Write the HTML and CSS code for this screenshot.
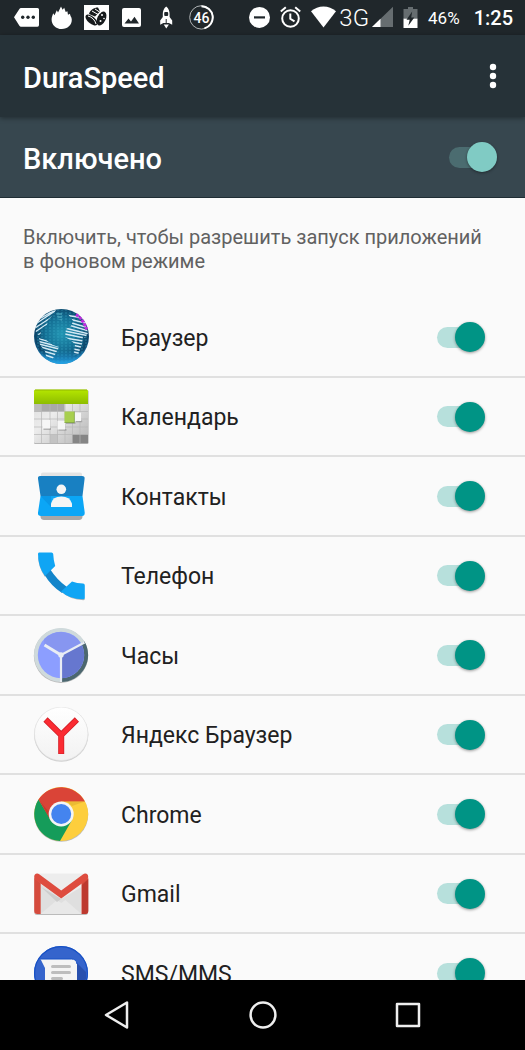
FILE: index.html
```html
<!DOCTYPE html>
<html lang="ru">
<head>
<meta charset="utf-8">
<meta name="viewport" content="width=device-width, initial-scale=1">
<title>DuraSpeed</title>
<link rel="stylesheet" href="styles.css">
</head>
<body>
<div class="status">
  <div class="status-left">
    <svg width="25" height="25" viewBox="0 0 25 25"><path fill="#fff" d="M7 3h16.500q1.500 0 1.500 1.500v15.500q0 1.700-1.500 1.700H7q-1 0-1.600-.9L0 12.300 5.400 4Q6 3 7 3z"/><g fill="#20272b"><circle cx="8.700" cy="12.300" r="1.700"/><circle cx="14" cy="12.300" r="1.700"/><circle cx="19.300" cy="12.300" r="1.700"/></g></svg>
    <svg width="25" height="25" viewBox="0 0 25 25"><path fill="#fff" d="M2.600 14.500c0-2.500 1-4.300 1.600-6.300l1.300 2.100 2.300-5 1.200 2.200L12 1.500l1.600 3.300 1.600-2 1.500 4.300 1.700-.8.600 3.500 2-1c-.2 2 1.800 3 1.800 6 0 5.200-4.200 9.300-10 9.300S2.600 20 2.600 14.500z"/></svg>
    <svg width="25" height="25" viewBox="0 0 25 25"><path fill="#fff" d="M0 0h25v25H0z"/><g fill="#171b1d"><ellipse cx="7.500" cy="15" rx="3.600" ry="7.200" transform="rotate(-50 7.500 15)"/><ellipse cx="17.500" cy="13.500" rx="4.200" ry="7.500" transform="rotate(25 17.500 13.500)"/><path d="M5 9c1-4 5-6.500 9-6.500l2 4-5 5z"/></g><path d="M4 11c4 1 7 4 8 8M8 6l7 4M11 4l6 4" stroke="#fff" fill="none" stroke-width="1"/><g fill="#fff"><circle cx="18" cy="10" r="1"/><circle cx="16.500" cy="16" r="1"/><circle cx="20" cy="13.500" r=".8"/></g></svg>
    <svg width="25" height="25" viewBox="0 0 25 25"><rect x="3" y="3" width="19" height="19" rx="2" fill="#fff"/><path fill="#20272b" d="M5.500 18.500l4-5 2.500 3 3.500-4.700 4.500 6.700z"/></svg>
    <svg width="25" height="25" viewBox="0 0 25 25"><path fill="#fff" d="M12.200 1.500c2.500 2 3.400 4.700 3.400 7.500v3l2.600 3.500v4.200l-3.300-1.600H9.400l-3.200 1.600v-4.200L8.800 12V9c0-2.800.9-5.500 3.400-7.500zM9.700 19.400h5.200l-2.600 4z"/><rect x="10.200" y="7" width="4" height="4" rx="1" fill="#20272b"/><path d="M12.200 14v5" stroke="#20272b"/></svg>
    <svg width="25" height="25" viewBox="0 0 25 25"><circle cx="12.400" cy="12.400" r="11.700" fill="none" stroke="#aeb2b4" stroke-width="1"/><path d="M12.400 1.200a11.300 11.300 0 0 1 3 22.200" fill="none" stroke="#fff" stroke-width="2"/><text x="12.400" y="17.500" class="ring-text">46</text></svg>
  </div>
  <div class="status-right">
    <svg width="21" height="25" viewBox="0 0 21 25"><circle cx="10.500" cy="12.400" r="10.500" fill="#fff"/><path d="M5 12.400h11" stroke="#20272b" stroke-width="2.200"/></svg>
    <svg width="21" height="25" viewBox="0 0 21 25" fill="none" stroke="#fff" stroke-width="2"><circle cx="10.500" cy="13.500" r="8.300"/><path d="M10.300 8.500v5.300l4.200 2.600M.8 6.500l5-4.300M20.200 6.500l-5-4.300"/></svg>
    <div class="signal">
      <svg width="25" height="25" viewBox="0 0 25 25"><path fill="#fff" d="M0 6.300C7-.2 18-.2 25 6.300L12.500 22.500z"/></svg>
      <span class="network">3G</span>
      <svg width="21" height="25" viewBox="0 0 21 25"><path fill="#666d70" d="M21 1.700V22H0z"/><path fill="#fff" d="M8.500 13.800V22H0z"/></svg>
    </div>
    <svg width="15" height="25" viewBox="0 0 15 25"><path fill="#666d70" d="M5 2h5v2h4.500v10H.5V4H5z"/><path fill="#fff" d="M.5 13.700h14V23H.5z"/><path fill="#20272b" d="M9.200 6.500L3.500 14.700h3.200l-1.400 6 6-8.200H8.200z"/></svg>
    <span class="percent">46%</span>
    <time class="clock">1:25</time>
  </div>
</div>

<header class="appbar">
  <h1 class="title">DuraSpeed</h1>
  <button class="more" type="button" aria-label="Ещё"><svg width="8" height="26" viewBox="0 0 8 26" fill="#fff"><circle cx="4" cy="4" r="3.200"/><circle cx="4" cy="13" r="3.200"/><circle cx="4" cy="22" r="3.200"/></svg></button>
</header>

<div class="master">
  <label class="title" for="master">Включено</label>
  <input class="switch switch-light" id="master" type="checkbox" checked>
</div>

<main class="content">
  <p class="note">Включить, чтобы разрешить запуск приложений в фоновом режиме</p>
  <ul class="apps">
    <li class="app">
      <svg class="icon" viewBox="0 0 56 56">
        <defs>
          <radialGradient id="sea" cx=".5" cy=".45" r=".55"><stop offset="0" stop-color="#2396b4"/><stop offset=".55" stop-color="#146f94"/><stop offset=".88" stop-color="#0c4468"/><stop offset="1" stop-color="#1c6da4"/></radialGradient>
          <linearGradient id="glow" x1="0" y1="0" x2="0" y2="1"><stop offset=".75" stop-color="#23a5e8" stop-opacity="0"/><stop offset="1" stop-color="#23a5e8"/></linearGradient>
          <pattern id="dots" width="4" height="3" patternUnits="userSpaceOnUse"><path d="M0 1h2" stroke="#3fb4cf" stroke-width=".8"/></pattern>
          <clipPath id="land"><path d="M3 24L2 16 10 5l13-4-3 5-5 5-1 5-5 3-2 8zM6 29l7 2 7 5 6 2-3 6-5 9-4-2-2-9-5-6zM23 4h6v8l-4-2zM35 5l5-2 12 9 3 12-3 5-2-2-1 8-4 11-4-1 1-10-5-4-5-3 1-8 5-3 2-5z"/></clipPath>
        </defs>
        <circle cx="28.500" cy="27.500" r="27.500" fill="url(#sea)"/>
        <circle cx="28.500" cy="27.500" r="27" fill="url(#dots)" opacity=".55"/>
        <circle cx="28.500" cy="27.500" r="27.500" fill="url(#glow)"/>
        <g clip-path="url(#land)"><path d="M3 27l18-11M2 23L20 11M2 19l20-13M4 14L25 0M8 9l14-8M4 29l24 7M4 32l23 6M6 35l20 5M8 38l17 5M10 42l14 4M12 46l12 4M32 6l24 4M32 9l24 6M32 12l24 7M32 15l24 7M32 19l24 6M32 22l24 5M32 25l24 5M32 29l24 4M34 32l20 4M35 35l17 4M36 39l14 3M37 42l12 3M37 45l12 3" stroke="#d3e9f4" stroke-width="1.400"/><path d="M23 5h6M23 8h6M24 11h5" stroke="#61bed0"/></g>
        <path d="M43 5.500a26 26 0 0 1 10.500 15" stroke="#c02be0" stroke-width="3" fill="none" stroke-dasharray="3 1"/>
      </svg>
      <label class="name" for="app1">Браузер</label>
      <input class="switch" id="app1" type="checkbox" checked>
    </li>
    <li class="app">
      <svg class="icon" viewBox="0 0 56 56">
        <defs>
          <linearGradient id="lime" x1="0" y1="0" x2="0" y2="1"><stop offset="0" stop-color="#b5e600"/><stop offset="1" stop-color="#8dbd00"/></linearGradient>
          <linearGradient id="grey" x1="0" y1="0" x2="1" y2="1"><stop offset="0" stop-color="#d9d9d9"/><stop offset=".4" stop-color="#ececec"/><stop offset="1" stop-color="#b5b5b5"/></linearGradient>
        </defs>
        <rect x="1" y="1" width="54.500" height="54" rx="1.500" fill="#aaa"/>
        <rect x="1" y="1" width="54" height="53.200" rx="1.500" fill="url(#grey)"/>
        <path d="M1.500 14.500h30v8h-30z" fill="#a9a9a9"/><path d="M1.500 14.500h7v8h-7z" fill="#bbb"/>
        <path d="M39 45.500h16v8.500H39z" fill="#858585"/><path d="M17 45.500h8v8.500h-8z" fill="#c3c3c3"/>
        <path d="M8.500 14v40M17 14v40M24.500 14v40M32 14v40M39.500 14v40M47 14v40M1 22.500h54M1 30h54M1 38h54M1 45.500h54" stroke="#b8b8b8" stroke-width=".7"/>
        <path d="M1 2q0-1.300 1.500-1.300h51Q55 .7 55 2v13H1z" fill="url(#lime)"/><path d="M2 1h52" stroke="#91b800"/>
        <g fill="#777" opacity=".45"><path d="M10.500 39h7.500v2h-7.500zM25.500 40h8v1.800h-8zM33 33h9.500v2H33zM43 31.500h6.200v1.800H43z"/></g>
        <path d="M9.500 31h7.500v8.500H9.500zM24.500 32H32v8.500h-7.500zM41.500 23.500H48V32h-6.500z" fill="#f6f6f6"/>
        <path d="M31.500 22.500H41v11h-9.500z" fill="#a8cf4e"/><path d="M31.500 33.500h9.900V22.500" fill="none" stroke="#7da33c" stroke-width=".8"/>
      </svg>
      <label class="name" for="app2">Календарь</label>
      <input class="switch" id="app2" type="checkbox" checked>
    </li>
    <li class="app">
      <svg class="icon" viewBox="0 0 56 56">
        <path d="M8 8V6q0-1.500 2-1.500h37q2 0 2 1.500v3z" fill="#e3e3e3"/>
        <path d="M7.500 47v2q.5 3 3.500 3h35q3 0 3.500-3v-2z" fill="#a7a7a7"/>
        <path d="M7 8h42q3 0 2.600 2.800L49.500 28h-42L5 10.800Q4.700 8 7 8z" fill="#1880c2"/>
        <path d="M7.500 28h42l2.200 16.500q.3 3.500-2.700 3.500H8q-3.500 0-3-3.500z" fill="#0ba6f6"/>
        <path d="M7.500 28H18v11z" fill="#0998e8"/>
        <circle cx="28.300" cy="21.300" r="4.800" fill="#f5f5f5"/><path d="M18 39v-3.500q1.500-7 10.300-7T39 35.500V39z" fill="#f5f5f5"/>
      </svg>
      <label class="name" for="app3">Контакты</label>
      <input class="switch" id="app3" type="checkbox" checked>
    </li>
    <li class="app">
      <svg class="icon" viewBox="0 0 56 56">
        <path d="M28 43.500Q37 52 50.500 52.200q1.300 0 1.300-1.500L39 46zM5 8q.5 12 7 21l2-3z" fill="#b5b5b5"/>
        <path d="M11 26q7 12 18 19l5-6Q24 32 17 21z" fill="#1385ca"/>
        <path d="M6 4.500h12.500q1.500 0 1.700 1.500.3 6.500 2 12L12 28Q5 19 5 6q0-1.500 1-1.500z" fill="#10a5f4"/>
        <path d="M28 43.500l11-10Q44 35.500 50 35.500q1.800.2 1.800 2V50q0 1.300-1.500 1.300Q37 51.500 28 43.500z" fill="#10a5f4"/>
      </svg>
      <label class="name" for="app4">Телефон</label>
      <input class="switch" id="app4" type="checkbox" checked>
    </li>
    <li class="app">
      <svg class="icon" viewBox="0 0 56 56">
        <circle cx="28" cy="28.700" r="27.200" fill="#bbb"/><circle cx="28" cy="28" r="27" fill="#cfdadc"/>
        <path d="M28 28L51.500 14.500A27 27 0 0 1 28 55z" fill="#4c676f"/>
        <circle cx="28" cy="28" r="23.200" fill="#8c9eff"/>
        <path d="M28 28l20-11.600A23.200 23.200 0 0 1 28 51.200z" fill="#6677cf"/><path d="M28 28l20-11.600A23.200 23.200 0 0 0 11 12.500L11.500 18z" fill="#8796f0"/>
        <path d="M28 28v27M28 28L51.500 15.500" stroke="#e9edf4" stroke-width="2.200"/><path d="M28 28L11.500 18" stroke="#e9edf4" stroke-width="3"/><circle cx="28" cy="28" r="2.700" fill="#e9edf4"/>
      </svg>
      <label class="name" for="app5">Часы</label>
      <input class="switch" id="app5" type="checkbox" checked>
    </li>
    <li class="app">
      <svg class="icon" viewBox="0 0 56 56">
        <defs><linearGradient id="white" x1="0" y1="0" x2="0" y2="1"><stop offset="0" stop-color="#fff"/><stop offset="1" stop-color="#f2f2f2"/></linearGradient></defs>
        <circle cx="28.200" cy="27.600" r="27.200" fill="#cfcfcf"/><circle cx="28.200" cy="26.800" r="26.700" fill="url(#white)" stroke="#e2e2e2" stroke-width=".6"/>
        <path d="M12.500 12.500L28.200 28 43.900 12.500M28.200 27v20" fill="none" stroke="#d41f27" stroke-width="6"/>
        <path d="M13 13L28.200 28 43.400 13M28.200 28v18.500" fill="none" stroke="#fb2b32" stroke-width="4.500"/>
      </svg>
      <label class="name" for="app6">Яндекс Браузер</label>
      <input class="switch" id="app6" type="checkbox" checked>
    </li>
    <li class="app">
      <svg class="icon" viewBox="0 0 56 56">
        <circle cx="28.200" cy="28.800" r="27" fill="#bbb"/><circle cx="28.200" cy="28" r="27" fill="#fdce3d"/>
        <path d="M28.200 28L18 34 5.500 13.500A27 27 0 0 0 27 55l12-21z" fill="#159c5a"/>
        <path d="M28.200 15.500h23.700A27 27 0 0 0 5.500 13.500L17.500 34z" fill="#da4437"/>
        <path d="M34 15.500h17.900L39 20z" fill="#d9a72c" opacity=".5"/><path d="M5.500 13.500L17.500 34l1-5z" fill="#a52c24" opacity=".35"/>
        <circle cx="28.200" cy="28" r="12.500" fill="#f5f5f5"/><circle cx="28.200" cy="28" r="10" fill="#4484ef"/>
      </svg>
      <label class="name" for="app7">Chrome</label>
      <input class="switch" id="app7" type="checkbox" checked>
    </li>
    <li class="app">
      <svg class="icon" viewBox="0 0 56 56">
        <rect x="1.200" y="9" width="54" height="40" rx="3" fill="#bbb"/>
        <rect x="1.200" y="7.500" width="54" height="40.500" rx="3" fill="#ededed"/>
        <path d="M7.500 18v30h41V21L28.200 33z" fill="#dfdfdf"/><path d="M7.500 48L24 34l4.200 3 4.200-3L48.500 48z" fill="#e8e8e8"/><path d="M8 21l20 12-4 3z" fill="#cdcdcd"/>
        <path d="M1.200 12V45q0 3 3 3h3.500V17zM55.200 12V45q0 3-3 3h-3.700V17z" fill="#d54b3d"/><path d="M49 19l6.200-6V45q0 3-3 3H49z" fill="#bd392f"/>
        <path d="M1.200 11q0-3.500 3-3.500 1 0 2 .8l22 16.200 22-16.200q1-.8 2-.8 3 0 3 3.500 0 2-1.500 3L28.200 32.500 2.700 14q-1.500-1-1.500-3z" fill="#de4c3f"/>
      </svg>
      <label class="name" for="app8">Gmail</label>
      <input class="switch" id="app8" type="checkbox" checked>
    </li>
    <li class="app">
      <svg class="icon" viewBox="0 0 56 56">
        <circle cx="28" cy="28" r="27" fill="#3564cc"/><path d="M43 17l10 10v7L42 45z" fill="#2850ae"/><circle cx="28" cy="28" r="26.400" fill="none" stroke="#1751c5" stroke-width="1.200"/>
        <path d="M7.500 14h31q5.500 0 5.500 5.500V37q0 4-4 4H16q-4 0-4-4V23z" fill="#f4f4f4"/><path d="M7.500 14h31q5 0 5.500 5" fill="none" stroke="#1751c5"/>
        <path d="M19.500 21.500h17M19.500 27.500h17M19.500 33.500h9" stroke="#bdbdbd" stroke-width="3" stroke-linecap="round"/>
      </svg>
      <label class="name" for="app9">SMS/MMS</label>
      <input class="switch" id="app9" type="checkbox" checked>
    </li>
  </ul>
</main>

<nav class="navbar">
  <button type="button" aria-label="Назад"><svg width="30" height="30" viewBox="0 0 30 30"><path d="M25 2.500v25L4 15z"/></svg></button>
  <button type="button" aria-label="Домой"><svg width="30" height="30" viewBox="0 0 30 30"><circle cx="15" cy="15" r="12.400"/></svg></button>
  <button type="button" aria-label="Обзор"><svg width="30" height="30" viewBox="0 0 30 30"><path d="M4 4h22v22H4z"/></svg></button>
</nav>
</body>
</html>
```

FILE: styles.css
```css
* {
  box-sizing: border-box;
}

body {
  margin: 0;
  height: 100vh;
  display: flex;
  flex-direction: column;
  background: #fafafa;
  color: #212121;
  font-family: Roboto, "Noto Sans", sans-serif;
}

svg {
  display: block;
  flex: none;
}

button {
  display: grid;
  place-items: center;
  padding: 0;
  border: 0;
  background: none;
}

.status {
  flex: none;
  display: flex;
  justify-content: space-between;
  height: 35px;
  padding: 0 12px 0 14px;
  background: #20272b;
  color: #fff;
}

.status-left,
.status-right,
.signal {
  display: flex;
  align-items: center;
  gap: 10px;
}

.signal {
  gap: 3px;
}

.ring-text {
  fill: #fff;
  font: 500 14px Roboto, sans-serif;
  text-anchor: middle;
}

.network {
  font-size: 24px;
  font-weight: 300;
}

.percent {
  font-size: 17px;
}

.clock {
  margin-left: 4px;
  font-size: 20px;
  font-weight: 500;
}

.appbar,
.master {
  flex: none;
  display: flex;
  align-items: center;
  justify-content: space-between;
  padding: 0 28px 0 23px;
}

.appbar {
  z-index: 1;
  height: 82px;
  background: #263238;
  box-shadow: 0 1px 5px rgba(0, 0, 0, 0.4);
}

.master {
  height: 81px;
  background: #37474f;
  border-bottom: 1px solid #1f2d34;
}

.title {
  margin: 0;
  padding-top: 3px;
  color: #fff;
  font-size: 29px;
  font-weight: 500;
  line-height: 36px;
}

.content {
  flex: 1;
  min-height: 0;
  overflow: hidden auto;
  scrollbar-width: none;
}

.note {
  margin: 0;
  padding: 27px 32px 25px 23px;
  color: #616161;
  font-size: 20px;
  line-height: 24px;
}

.apps {
  margin: 0;
  padding: 0;
  list-style: none;
}

.app {
  display: flex;
  align-items: center;
  gap: 32px;
  height: 80px;
  padding: 0 40px 0 33px;
  border-bottom: 2px solid #e0e0e0;
}

.app:nth-child(even) {
  height: 79px;
}

.icon {
  width: 56px;
  height: 56px;
}

.name {
  flex: 1;
  padding-top: 3px;
  font-size: 23px;
  line-height: 32px;
}

.switch {
  appearance: none;
  flex: none;
  display: grid;
  align-items: center;
  width: 48px;
  height: 30px;
  margin: 0;
}

.switch::before,
.switch::after {
  content: "";
  grid-area: 1 / 1;
}

.switch::before {
  width: 42px;
  height: 21px;
  border-radius: 11px;
  background: #b7e0dc;
}

.switch::after {
  justify-self: end;
  width: 30px;
  height: 30px;
  border-radius: 50%;
  background: #009485;
  box-shadow: 0 1px 3px rgba(0, 0, 0, 0.4);
}

.switch:not(:checked)::after {
  justify-self: start;
}

.switch-light::before {
  background: #4b6c70;
}

.switch-light::after {
  background: #80cbc4;
}

.navbar {
  flex: none;
  display: flex;
  height: 70px;
  padding: 0 44px;
  background: #000;
}

.navbar button {
  flex: 1;
}

.navbar svg {
  fill: none;
  stroke: #eee;
  stroke-width: 2.5px;
  stroke-linejoin: round;
}
```
